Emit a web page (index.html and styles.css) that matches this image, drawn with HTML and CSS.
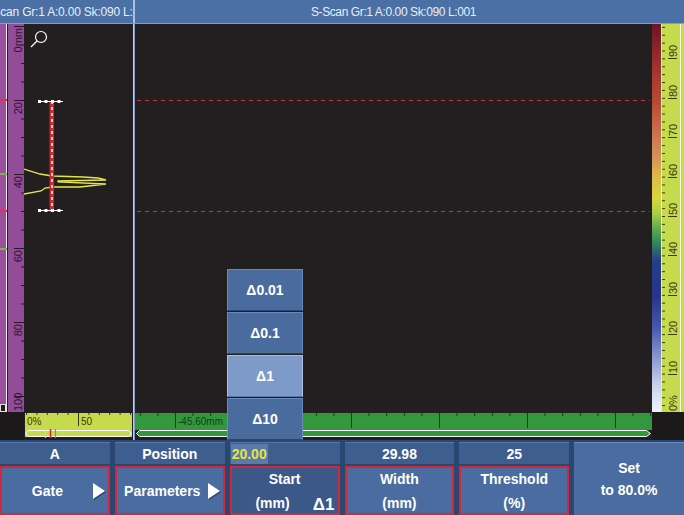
FILE: index.html
```html
<!DOCTYPE html>
<html lang="en">
<head>
<meta charset="utf-8">
<title>S-Scan</title>
<link rel="stylesheet" href="styles.css">
</head>
<body>
<div class="app">
  <header class="titlebar">
    <div class="title title-a"><span>A-Scan Gr:1 A:0.00 Sk:090 L:001</span></div>
    <div class="title-sep"></div>
    <div class="title title-s"><span>S-Scan Gr:1 A:0.00 Sk:090 L:001</span></div>
    <div class="title-rest"></div>
  </header>

  <main class="views">
    <div class="depth-col">
      <div class="marker-strip">
        <i class="mark mark-red" style="top:75px"></i>
        <i class="mark mark-green" style="top:149px"></i>
        <i class="mark mark-red" style="top:186px"></i>
        <i class="mark mark-green" style="top:224px"></i>
        <i class="strip-end"></i>
      </div>
      <div class="strip-line"></div>
      <div class="strip-gap"></div>
      <svg class="depth-ruler" width="16" height="388" viewBox="0 0 16 388">
        <defs>
          <pattern id="dtick" patternUnits="userSpaceOnUse" x="0" y="2" width="16" height="18.5">
            <rect x="13" y="0" width="3" height="1" fill="#2b1530"/>
          </pattern>
        </defs>
        <rect x="0" y="0" width="16" height="388" fill="#924c98"/>
        <rect x="0" y="0" width="16" height="388" fill="url(#dtick)"/>
        <g stroke="#2b1530" stroke-width="1">
          <line x1="6" y1="2.5" x2="16" y2="2.5"/>
          <line x1="6" y1="76.5" x2="16" y2="76.5"/>
          <line x1="6" y1="150.5" x2="16" y2="150.5"/>
          <line x1="6" y1="224.5" x2="16" y2="224.5"/>
          <line x1="6" y1="298.5" x2="16" y2="298.5"/>
          <line x1="6" y1="372.5" x2="16" y2="372.5"/>
        </g>
        <g class="rtext" fill="#2b1530">
          <text transform="translate(14 4) rotate(-90)" text-anchor="end">0mm</text>
          <text transform="translate(14 78) rotate(-90)" text-anchor="end">20</text>
          <text transform="translate(14 152) rotate(-90)" text-anchor="end">40</text>
          <text transform="translate(14 226) rotate(-90)" text-anchor="end">60</text>
          <text transform="translate(14 300) rotate(-90)" text-anchor="end">80</text>
          <text transform="translate(14 387) rotate(-90)">100</text>
        </g>
      </svg>
    </div>

    <div class="ascan">
      <svg width="109" height="388" viewBox="0 0 109 388">
        <g stroke="#ffffff" fill="none" stroke-width="1.2">
          <circle cx="17" cy="13" r="5.5"/>
          <line x1="13" y1="17" x2="7" y2="23"/>
        </g>
        <polyline points="0,145 16,150 28,152 59,153 74,154 82,156 34,157 34,158 82,160 56,163 28,163 21,164 17,167 0,170" fill="none" stroke="#e6e64a" stroke-width="1.3"/>
        <rect x="25.5" y="77" width="4.5" height="111" fill="#d0282e"/>
        <line x1="28" y1="77" x2="28" y2="188" stroke="#ffffff" stroke-width="1.5" stroke-dasharray="3 3"/>
        <g stroke="#ffffff">
          <line x1="14" y1="77.5" x2="39" y2="77.5" stroke-width="1"/>
          <line x1="14" y1="77.5" x2="39" y2="77.5" stroke-width="3" stroke-dasharray="3 3.5"/>
          <line x1="14" y1="186.5" x2="39" y2="186.5" stroke-width="1"/>
          <line x1="14" y1="186.5" x2="39" y2="186.5" stroke-width="3" stroke-dasharray="3 3.5"/>
        </g>
      </svg>
    </div>

    <div class="vsep"></div>

    <div class="sscan">
      <svg width="517" height="388" viewBox="0 0 517 388">
        <g stroke="#d02a3c" stroke-width="1" stroke-dasharray="4 4">
          <line x1="2" y1="76.5" x2="515" y2="76.5"/>
          <line x1="2" y1="187.5" x2="515" y2="187.5"/>
        </g>
      </svg>
    </div>

    <div class="colorbar"></div>

    <svg class="amp-ruler" width="22" height="388" viewBox="0 0 22 388">
      <defs>
        <pattern id="atick" patternUnits="userSpaceOnUse" x="0" y="2.88" width="22" height="7.88">
          <rect x="0" y="0" width="3" height="1" fill="#3a3a10"/>
        </pattern>
      </defs>
      <rect x="0" y="0" width="22" height="388" fill="#c6da4e"/>
      <rect x="0" y="0" width="4" height="388" fill="url(#atick)"/>
      <rect x="18" y="0" width="1" height="388" fill="#f4f8e0"/>
      <g stroke="#3a3a10" stroke-width="1">
        <line x1="6" y1="34.5" x2="15" y2="34.5"/>
        <line x1="6" y1="74.5" x2="15" y2="74.5"/>
        <line x1="6" y1="113.5" x2="15" y2="113.5"/>
        <line x1="6" y1="153.5" x2="15" y2="153.5"/>
        <line x1="6" y1="192.5" x2="15" y2="192.5"/>
        <line x1="6" y1="231.5" x2="15" y2="231.5"/>
        <line x1="6" y1="271.5" x2="15" y2="271.5"/>
        <line x1="6" y1="310.5" x2="15" y2="310.5"/>
        <line x1="6" y1="350.5" x2="15" y2="350.5"/>
      </g>
      <g class="rtext" fill="#3a3a10">
        <text transform="translate(15 33) rotate(-90)">90</text>
        <text transform="translate(15 73) rotate(-90)">80</text>
        <text transform="translate(15 112) rotate(-90)">70</text>
        <text transform="translate(15 152) rotate(-90)">60</text>
        <text transform="translate(15 191) rotate(-90)">50</text>
        <text transform="translate(15 230) rotate(-90)">40</text>
        <text transform="translate(15 270) rotate(-90)">30</text>
        <text transform="translate(15 309) rotate(-90)">20</text>
        <text transform="translate(15 349) rotate(-90)">10</text>
        <text transform="translate(15 387) rotate(-90)">0%</text>
      </g>
    </svg>

    <div class="corner-left"></div>

    <svg class="amp-axis" width="109" height="28" viewBox="0 0 109 28">
      <defs>
        <pattern id="btick" patternUnits="userSpaceOnUse" x="2" y="0" width="10.4" height="28">
          <rect x="0" y="0" width="1" height="3" fill="#3a3a10"/>
        </pattern>
      </defs>
      <rect x="1" y="1" width="107" height="24" fill="#c6da4e"/>
      <rect x="1" y="1" width="107" height="4" fill="url(#btick)"/>
      <line x1="54.5" y1="1" x2="54.5" y2="14" stroke="#3a3a10"/>
      <text class="axtext" x="3" y="13" fill="#3a3a10">0%</text>
      <text class="axtext" x="57" y="13" fill="#3a3a10">50</text>
      <polygon points="1.5,21.5 4.5,18.5 104.5,18.5 107.5,21.5 104.5,24.5 4.5,24.5" fill="#c6da4e" stroke="#ffffff" stroke-width="1"/>
      <line x1="21.5" y1="17" x2="21.5" y2="26" stroke="#f0e030" stroke-width="1.2"/>
      <line x1="26.5" y1="17" x2="26.5" y2="26" stroke="#e02020" stroke-width="1.5"/>
      <line x1="31.5" y1="17" x2="31.5" y2="26" stroke="#60b040" stroke-width="1.2"/>
    </svg>

    <svg class="scan-axis" width="517" height="28" viewBox="0 0 517 28">
      <defs>
        <pattern id="stick" patternUnits="userSpaceOnUse" x="4.8" y="0" width="17.6" height="28">
          <rect x="0" y="0" width="1" height="4" fill="#163a18"/>
        </pattern>
      </defs>
      <rect x="0" y="1" width="517" height="17" fill="#33983d"/>
      <rect x="0" y="1" width="517" height="5" fill="url(#stick)"/>
      <g stroke="#163a18" stroke-width="1">
        <line x1="40.5" y1="1" x2="40.5" y2="16"/>
        <line x1="128.5" y1="1" x2="128.5" y2="16"/>
        <line x1="216.5" y1="1" x2="216.5" y2="16"/>
        <line x1="304.5" y1="1" x2="304.5" y2="16"/>
        <line x1="392.5" y1="1" x2="392.5" y2="16"/>
        <line x1="480.5" y1="1" x2="480.5" y2="16"/>
      </g>
      <text class="axtext" x="43" y="13" fill="#163a18">-45.60mm</text>
      <polygon points="1.5,21.5 4.5,18.5 511.5,18.5 515.5,21.5 511.5,24.5 4.5,24.5" fill="#33983d" stroke="#ffffff" stroke-width="1"/>
    </svg>

    <div class="corner-right"></div>
  </main>

  <footer class="controls">
    <div class="ctl">
      <div class="ctl-value">A</div>
      <div class="ctl-btn"><span class="ctl-label">Gate</span><i class="arrow"></i></div>
    </div>
    <div class="ctl">
      <div class="ctl-value">Position</div>
      <div class="ctl-btn"><span class="ctl-label">Parameters</span><i class="arrow"></i></div>
    </div>
    <div class="ctl">
      <div class="ctl-value ctl-edit"><span class="edit-text">20.00</span></div>
      <div class="ctl-btn ctl-dark"><span class="ctl-label ctl-two">Start<br><span class="unit-left">(mm)</span></span><span class="step">Δ1</span></div>
    </div>
    <div class="ctl">
      <div class="ctl-value">29.98</div>
      <div class="ctl-btn"><span class="ctl-label ctl-two">Width<br>(mm)</span></div>
    </div>
    <div class="ctl">
      <div class="ctl-value">25</div>
      <div class="ctl-btn"><span class="ctl-label ctl-two">Threshold<br>(%)</span></div>
    </div>
    <div class="ctl ctl-single">
      <div class="ctl-big">Set<br>to 80.0%</div>
    </div>
  </footer>

  <div class="popup">
    <div class="popup-item">Δ0.01</div>
    <div class="popup-item">Δ0.1</div>
    <div class="popup-item popup-on">Δ1</div>
    <div class="popup-item">Δ10</div>
  </div>
</div>
</body>
</html>
```

FILE: styles.css
```css
* { box-sizing: border-box; }
html, body { margin: 0; padding: 0; }
body {
  width: 684px;
  height: 515px;
  overflow: hidden;
  background: #231f20;
  font-family: "Liberation Sans", Arial, sans-serif;
}
.app {
  position: relative;
  width: 684px;
  height: 515px;
  display: flex;
  flex-direction: column;
}

/* title bar */
.titlebar {
  height: 24px;
  flex: none;
  display: grid;
  grid-template-columns: 133px 2px 517px 32px;
  background: #4a70a5;
  border-bottom: 1px solid #7e9ecb;
  color: #e8eef6;
  font-size: 12px;
  letter-spacing: -0.4px;
}
.title {
  display: flex;
  justify-content: center;
  align-items: center;
  overflow: hidden;
  white-space: nowrap;
}
.title-a { letter-spacing: -0.2px; }
.title-sep { background: #a9c2e4; }

/* views */
.views {
  flex: none;
  height: 416px;
  display: grid;
  grid-template-columns: 24px 109px 2px 517px 10px 22px;
  grid-template-rows: 388px 28px;
  background: #231f20;
}
.depth-col {
  display: flex;
  height: 388px;
}
.marker-strip {
  position: relative;
  width: 6px;
  background: #9a509e;
}
.mark {
  position: absolute;
  left: 0;
  width: 7px;
  height: 2px;
}
.mark-red { background: #e8304e; }
.mark-green { background: #78b848; }
.strip-end {
  position: absolute;
  left: 0;
  bottom: 0;
  width: 6px;
  height: 8px;
  background: #231f20;
  border: 1px solid #e0e0e0;
}
.strip-line { width: 1px; background: #f2f2f2; }
.strip-gap { width: 1px; background: #231f20; }
.depth-ruler { display: block; }
.rtext { font-family: "Liberation Sans", Arial, sans-serif; font-size: 11px; }
.axtext { font-family: "Liberation Sans", Arial, sans-serif; font-size: 10px; }

.ascan svg, .sscan svg { display: block; }
.vsep {
  grid-row: 1 / 3;
  grid-column: 3;
  background: linear-gradient(to right, #b8cfee 0 1px, #7e9cc8 1px 2px);
}
.colorbar {
  border-right: 1px solid #e8ecd8;
  background: linear-gradient(to bottom,
    #6e1424 0%, #9a2c2e 9%, #b84a34 20%, #cc6a4c 27%, #d4905a 34%,
    #dcc048 40%, #d8d83c 45%, #a8cc44 49%, #5aa850 53%, #2e8060 57%,
    #263f88 61%, #263488 70%, #4656ac 78%, #8090cc 85%, #c8d0ec 93%, #f0f2fa 100%);
}
.amp-ruler { display: block; }
.corner-left { grid-row: 2; grid-column: 1; background: #1c191a; }
.amp-axis { grid-row: 2; grid-column: 2; display: block; }
.scan-axis { grid-row: 2; grid-column: 4; display: block; }
.corner-right { grid-row: 2; grid-column: 5 / 7; background: #1c191a; }

/* controls */
.controls {
  flex: none;
  height: 75px;
  display: grid;
  grid-template-columns: repeat(6, 1fr);
  column-gap: 5px;
  padding-top: 2px;
  background: #2c4672;
  color: #ffffff;
  font-weight: bold;
  font-size: 14px;
}
.ctl {
  display: grid;
  grid-template-rows: 22px 49px;
  row-gap: 2px;
}
.ctl-value {
  display: flex;
  align-items: center;
  justify-content: center;
  background: #3e5e8f;
  border-top: 1px solid #5676a8;
}
.ctl-edit { justify-content: flex-start; padding-left: 1px; }
.edit-text {
  color: #e4e43c;
  background: #5b7aac;
  padding: 2px 1px;
}
.ctl-btn {
  position: relative;
  display: flex;
  align-items: center;
  background: #4b6ca0;
  border: 2px solid #d02a3a;
}
.ctl-dark { background: #3c5888; }
.ctl-label {
  flex: 1;
  text-align: center;
  white-space: nowrap;
}
.ctl-two { line-height: 24px; }
.unit-left { display: inline-block; margin-right: 24px; }
.arrow {
  width: 0;
  height: 0;
  margin-right: 3px;
  border-left: 12px solid #ffffff;
  border-top: 8px solid transparent;
  border-bottom: 8px solid transparent;
  filter: drop-shadow(1px 1px 0 #2a3e62);
}
.step {
  position: absolute;
  right: 3px;
  bottom: -2px;
  font-size: 17px;
}
.ctl-single { display: flex; }
.ctl-big {
  flex: 1;
  display: flex;
  align-items: center;
  justify-content: center;
  text-align: center;
  line-height: 22px;
  background: #4b6ca0;
  border-top: 1px solid #6a89bb;
}

/* popup */
.popup {
  position: absolute;
  left: 227px;
  top: 269px;
  width: 76px;
  display: flex;
  flex-direction: column;
  gap: 1px;
}
.popup-item {
  height: 42px;
  display: flex;
  align-items: center;
  justify-content: center;
  background: #4a6b9e;
  border: 1px solid #6a89bb;
  border-bottom-color: #2d4670;
  color: #ffffff;
  font-weight: bold;
  font-size: 14px;
}
.popup-on {
  background: #7d9ac8;
  border-color: #a9c0e2;
  border-bottom-color: #5a78a8;
}
```
